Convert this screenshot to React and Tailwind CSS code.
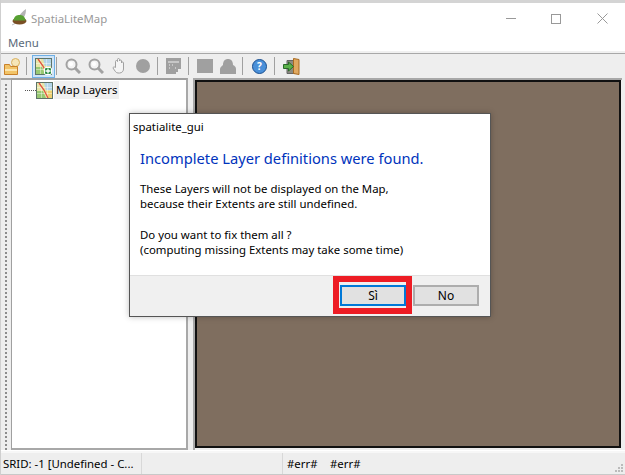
const font = { fontFamily: '"Noto Sans", "Open Sans", sans-serif' };

const MapIcon = ({ plus, size = 17 }) => (
  <svg width={size} height={size} viewBox="0 0 17 17">
    <rect x="0.500" y="0.500" width="16" height="16" fill="#e8e6a8" stroke="#5e7468" />
    <path d="M1 9 L1 16 L10 16 L7 9 Z" fill="#98c872" />
    <path d="M8 1 L16 1 L16 8 L10 8 Z" fill="#b2d4e8" />
    <path d="M10 9 L16 9 L16 16 L12 16 Z" fill="#efd070" />
    <path d="M1 5.500h15M1 11.500h15M5.500 1v15M11.500 1v15" stroke="#fff" strokeOpacity="0.4" />
    <path d="M3 1 L8 8 L12 16" fill="none" stroke="#e0523f" strokeWidth="1.300" />
    {plus && <rect x="9.500" y="9.500" width="7" height="7" rx="1.500" fill="#2f9048" stroke="#fff" />}
    {plus && <path d="M10.500 13h5M13 10.500v5" stroke="#fff" strokeWidth="1.300" />}
  </svg>
);

const Sep = ({ className }) => <div className={`w-px h-[18px] bg-[#a0a0a0] ${className}`} />;

const Lens = ({ className }) => (
  <svg width="16" height="16" viewBox="0 0 16 16" className={className}>
    <circle cx="6.500" cy="6.500" r="5" fill="#f4f4f4" stroke="#a2a2a2" strokeWidth="2" />
    <circle cx="6" cy="6" r="2" fill="#fff" />
    <path d="M9.500 9.500 L15 15" stroke="#a2a2a2" strokeWidth="3" />
  </svg>
);

const Btn = ({ children, className }) => (
  <button className={`h-[21px] w-[66px] bg-[#e1e1e1] text-[12px] leading-none text-black ${className}`}>{children}</button>
);

const gripDots = Array.from({ length: 92 });
const sizeDots = [0, 0, 1, 0, 1, 1, 1, 1, 1];

export default function App() {
  return (
    <div style={font} className="relative w-[625px] h-[475px] overflow-hidden bg-white text-black flex flex-col border-l border-[#cfcfcf]">
      <div className="h-[3px] bg-[#d4d4d4]" />

      {/* title bar */}
      <div className="h-[31px] flex items-center pl-[10px] bg-white">
        <svg width="17" height="17" viewBox="0 0 17 17" className="mb-[2px]">
          <path d="M8 7 C10 4 12 2 15 0 C15 3 14.500 6 13 8 Z" fill="#b4b4b4" />
          <path d="M1 16 L5 14" stroke="#bbb" />
          <ellipse cx="8.500" cy="12" rx="7" ry="3.500" fill="#7a4f24" />
          <path d="M2.500 11.500 C3 7 6 6 8.500 6 C11 6 14 7 14.500 11.500 Z" fill="#57a032" />
        </svg>
        <span className="ml-[3px] text-[11.4px] text-[#999]">SpatiaLiteMap</span>
        <div className="ml-auto flex items-center">
          <div className="w-[10px] h-px bg-[#999] mr-[35px]" />
          <div className="w-[10px] h-[10px] border border-[#999] mr-[36px]" />
          <svg width="11" height="11" viewBox="0 0 11 11" className="mr-[17px]">
            <path d="M0.500 0.500l10 10M10.500 0.500l-10 10" stroke="#999" />
          </svg>
        </div>
      </div>

      {/* menu */}
      <div className="h-[19px] pl-[7px] flex items-center text-[11.4px] text-[#5a6a7a] bg-white border-b-[2px] border-[#f0f0f0]">Menu</div>
      <div className="h-px bg-[#a8a8a8]" />

      {/* toolbar */}
      <div className="h-[24px] bg-[#eeeeee] flex items-center pl-[3px]">
        <svg width="17" height="17" viewBox="0 0 17 17">
          <circle cx="11.500" cy="4.500" r="4" fill="#f6e6b8" stroke="#d8b060" />
          <path d="M0.500 6.500h5l1 2h7v8h-13z" fill="#f2c468" stroke="#c9812a" />
          <path d="M1 12h12" stroke="#fbe6b0" strokeWidth="2" />
        </svg>
        <Sep className="ml-[5px]" />
        <div className="ml-[5px] w-[23px] h-[23px] bg-[#cfe4f7] border border-[#6fb0e6] flex items-center justify-center">
          <MapIcon plus />
        </div>
        <Sep className="ml-[1px]" />
        <Lens className="ml-[8px]" />
        <Lens className="ml-[7px]" />
        <svg width="14" height="16" viewBox="0 0 14 16" className="ml-[8px]">
          <path d="M3.500 9V3.500a1 1 0 012 0V1.500a1 1 0 012 0v1.500a1 1 0 012 0v2a1 1 0 012 0v6c0 2-1.500 4-4 4H6c-2 0-3-2-5-5 0-1 1-1.500 2.500-0.500z" fill="#f4f4f4" stroke="#a0a0a0" />
        </svg>
        <div className="w-[14px] h-[14px] ml-[10px] rounded-full bg-[#a0a0a0]" />
        <Sep className="ml-[7px]" />
        <svg width="16" height="16" viewBox="0 0 16 16" className="ml-[8px]">
          <path d="M0 0h15v11h-3v3h-2v2H0z" fill="#a0a0a0" />
          <path d="M2 4h11M3 7h1M3 10h1M6 7h1M9 10h1M12 13h1" stroke="#eee" />
        </svg>
        <Sep className="ml-[6px]" />
        <div className="w-[16px] h-[14px] bg-[#a0a0a0] ml-[8px]" />
        <svg width="16" height="15" viewBox="0 0 16 15" className="ml-[7px]">
          <path d="M0 15v-5c0-2 2-3 3-4 0-4 2-6 5-6s5 2 5 6c2 1 3 2 3 4v5z" fill="#a0a0a0" />
        </svg>
        <Sep className="ml-[6px]" />
        <div className="ml-[9px] w-[15px] h-[15px] rounded-full bg-[#4a90d9] border border-[#1a4f90] text-white text-[10px] leading-[13px] text-center font-bold">?</div>
        <Sep className="ml-[7px]" />
        <svg width="17" height="17" viewBox="0 0 17 17" className="ml-[8px]">
          <path d="M4 2.500h8v13H4z" fill="#8a8a80" stroke="#666" />
          <path d="M10.500 0.500l5.500 1v15l-5.500-1z" fill="#e0a860" stroke="#a86a20" />
          <path d="M0.500 6.500h5V4l5 4.500-5 4.500v-2.500h-5z" fill="#5ab04a" stroke="#2a6a2a" />
        </svg>
      </div>

      {/* main area */}
      <div className="flex-1 bg-[#eeeeee] flex pr-[3px] min-h-0">
        <div className="w-[10px] overflow-hidden flex flex-col gap-[2px] items-center pt-[4px] border-t-2 border-[#a8a8a8]">
          {gripDots.map((_, i) => (
            <div key={i} className="w-[2px] h-[2px] bg-[#8c8c8c] shrink-0" />
          ))}
        </div>
        <div className="w-[177px] bg-white border-t-2 border-l border-r-2 border-b-2 border-t-[#a0a0a0] border-l-[#a0a0a0] border-r-[#a8a8a8] border-b-[#a8a8a8] flex items-start pt-px">
          <div className="flex items-center ml-[13px]">
            <div className="w-[11px] border-t border-dotted border-[#555]" />
            <MapIcon />
            <span className="ml-[1px] px-[2px] bg-[#f0f0f0] text-[11.4px] leading-[18px]">Map Layers</span>
          </div>
        </div>
        <div className="ml-[5px] flex-1 border-t-2 border-l-2 border-[#a8a8a8] border-r-white border-b-white pb-[2px] pr-[1px]">
          <div className="h-full bg-[#7f6e5f] border-2 border-[#111]" />
        </div>
      </div>

      {/* status bar */}
      <div className="h-[24px] mt-px bg-[#eeeeee] border-t-2 border-[#f7f7f7] flex items-center text-[11.4px] border-b border-b-[#c8c8c8]">
        <div className="w-[141px] h-full pl-[2px] pt-px flex items-center border-r border-[#d8d8d8]">SRID: -1 [Undefined - C...</div>
        <div className="w-[141px] h-full border-r border-[#d8d8d8]" />
        <span className="ml-[4px] pt-px w-[43px]">#err#</span>
        <span className="pt-px">#err#</span>
        <div className="ml-auto mr-[2px] mt-auto mb-[2px] grid grid-cols-3 gap-px">
          {sizeDots.map((on, i) => (
            <div key={i} className={on ? 'w-[2px] h-[2px] bg-[#bbb]' : 'w-[2px] h-[2px]'} />
          ))}
        </div>
      </div>

      {/* dialog */}
      <div className="absolute left-[128px] top-[113px] w-[362px] h-[204px] bg-white border border-[#555] flex flex-col shadow-[0_0_6px_rgba(0,0,0,0.25)]">
        <div className="h-[25px] pl-[3px] flex items-center text-[11.4px]">spatialite_gui</div>
        <div className="flex-1 pl-[10px]">
          <div className="mt-[9px] text-[14.7px] leading-[20px] text-[#0033bc]">Incomplete Layer definitions were found.</div>
          <div className="mt-[13px] text-[11.4px] leading-[15px]">
            <p>These Layers will not be displayed on the Map,</p>
            <p>because their Extents are still undefined.</p>
            <p className="mt-[16px]">Do you want to fix them all ?</p>
            <p>(computing missing Extents may take some time)</p>
          </div>
        </div>
        <div className="h-[41px] bg-[#f0f0f0] border-t border-[#e0e0e0] flex justify-end pr-[11px]">
          <div className="h-[38px] w-[79px] border-[6px] border-[#ed1c24] flex items-start pl-px pt-[3px]">
            <Btn className="border-2 border-[#0078d7]">Sì</Btn>
          </div>
          <Btn className="ml-px mt-[9px] border-2 border-[#adadad]">No</Btn>
        </div>
      </div>
    </div>
  );
}
